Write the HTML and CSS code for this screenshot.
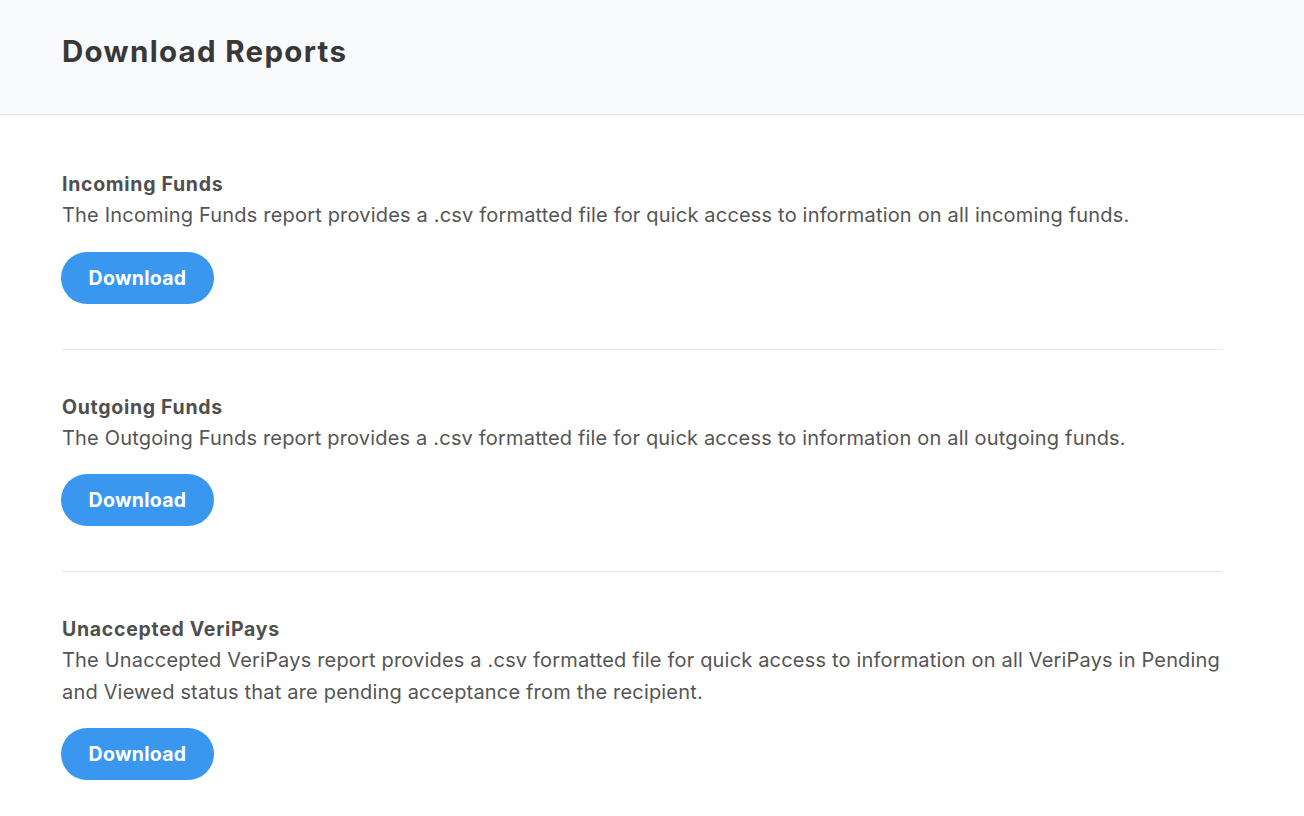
FILE: index.html
```html
<!DOCTYPE html>
<html lang="en">
<head>
<meta charset="utf-8">
<title>Download Reports</title>
<link rel="stylesheet" href="styles.css">
</head>
<body>
<header class="page-header">
  <h1 class="page-title">Download Reports</h1>
</header>
<main class="reports">
  <section class="report">
    <h2 class="report-title">Incoming Funds</h2>
    <p class="report-desc">The Incoming Funds report provides a .csv formatted file for quick access to information on all incoming funds.</p>
    <button class="btn" type="button">Download</button>
  </section>
  <section class="report">
    <h2 class="report-title">Outgoing Funds</h2>
    <p class="report-desc">The Outgoing Funds report provides a .csv formatted file for quick access to information on all outgoing funds.</p>
    <button class="btn" type="button">Download</button>
  </section>
  <section class="report">
    <h2 class="report-title">Unaccepted VeriPays</h2>
    <p class="report-desc">The Unaccepted VeriPays report provides a .csv formatted file for quick access to information on all VeriPays in Pending and Viewed status that are pending acceptance from the recipient.</p>
    <button class="btn" type="button">Download</button>
  </section>
</main>
</body>
</html>
```

FILE: styles.css
```css
* { box-sizing: border-box; }

html, body {
  margin: 0;
  padding: 0;
  background: #ffffff;
  font-family: Inter, "Noto Sans", "Liberation Sans", sans-serif;
  color: #555555;
}

.page-header {
  height: 115px;
  background: #f9fafb;
  border-bottom: 1px solid #e3e4e6;
  padding: 0 62px;
  display: flex;
  align-items: center;
}

.page-title {
  margin: 0 0 12px;
  font-size: 29.5px;
  font-weight: 700;
  color: #383838;
  letter-spacing: 1.3px;
}

.reports {
  padding: 12px 82px 0 62px;
}

.report {
  padding: 42px 0 45px;
  border-bottom: 1px solid #e6e6e6;
}

.report:last-child {
  border-bottom: none;
}

.report-title {
  margin: 0 0 1px;
  font-size: 19.5px;
  line-height: 30px;
  font-weight: 700;
  color: #4f4f4f;
  letter-spacing: 0.7px;
}

.report-desc {
  margin: 0 0 20px;
  font-size: 20px;
  line-height: 31.5px;
  color: #555555;
  letter-spacing: 0.18px;
  max-width: 1160px;
}

.btn {
  display: block;
  width: 153px;
  height: 52px;
  margin-left: -1px;
  border: none;
  border-radius: 26px;
  background: #3a97ef;
  color: #ffffff;
  font-family: inherit;
  font-size: 19.5px;
  font-weight: 700;
  letter-spacing: 0.3px;
  cursor: pointer;
  padding: 0;
}
```
